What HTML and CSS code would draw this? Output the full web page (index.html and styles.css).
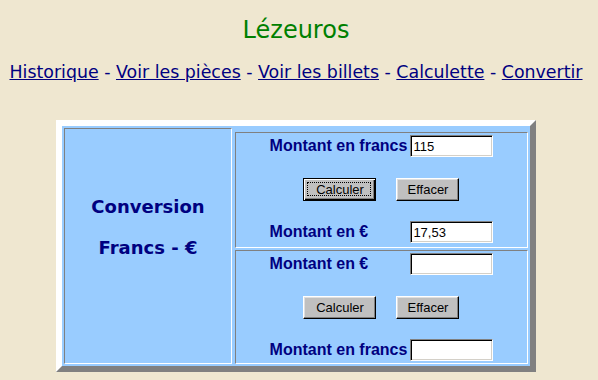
FILE: index.html
```html
<!DOCTYPE html>
<html lang="fr">
<head>
    <meta charset="UTF-8">
    <title>Lézeuros - Convertir</title>
    <link rel="stylesheet" href="styles.css">
</head>
<body>
    <div class="title">Lézeuros</div>

    <div class="nav">
        <a href="#">Historique</a> - <a href="#">Voir les pièces</a> - <a href="#">Voir les billets</a> - <a href="#">Calculette</a> - <a href="#">Convertir</a>
    </div>

    <div class="converter">
        <div class="side">
            <p>Conversion</p>
            <p>Francs - €</p>
        </div>

        <div class="forms">
            <form class="box box-top">
                <label for="francs1">Montant en francs</label>
                <input type="text" id="francs1" value="115">
                <div class="buttons">
                    <button type="button" class="btn btn-calc focused">Calculer</button>
                    <button type="reset" class="btn btn-clear">Effacer</button>
                </div>
                <label for="euros1">Montant en €</label>
                <input type="text" id="euros1" value="17,53">
            </form>

            <form class="box box-bottom">
                <label for="euros2">Montant en €</label>
                <input type="text" id="euros2">
                <div class="buttons">
                    <button type="button" class="btn btn-calc">Calculer</button>
                    <button type="reset" class="btn btn-clear">Effacer</button>
                </div>
                <label for="francs2">Montant en francs</label>
                <input type="text" id="francs2">
            </form>
        </div>
    </div>
</body>
</html>
```

FILE: styles.css
```css
body {
    margin: 0;
    padding: 0 14px 0 8px;
    background-color: #efe7d0; /* fond beige */
    color: #000080;
    font-family: "DejaVu Sans", Verdana, sans-serif;
}

.title {
    padding-top: 16px;
    font-size: 24px;
    line-height: 28px;
    color: #008000;
    text-align: center;
}

.nav {
    margin-top: 18px;
    font-size: 17.4px;
    line-height: 20px;
    text-align: center;
    white-space: nowrap;
}

.nav a {
    color: #000080;
}

/* tableau de conversion */
.converter {
    display: flex;
    gap: 2px;
    box-sizing: border-box;
    width: 480px;
    height: 252px;
    margin: 38px auto 0;
    padding: 2px;
    border: 6px solid;
    border-color: #ffffff #808080 #808080 #ffffff;
    background-color: #99ccff;
}

.side {
    display: flex;
    flex-direction: column;
    justify-content: center;
    align-items: center;
    box-sizing: border-box;
    width: 168px;
    padding-bottom: 39px;
    border: 1px solid;
    border-color: #808080 #ffffff #ffffff #808080;
    font-size: 18px;
    font-weight: bold;
    line-height: 41px;
}

.side p {
    margin: 0;
}

.forms {
    flex: 1;
    display: flex;
    flex-direction: column;
    gap: 2px;
    padding: 4px 0 0 1px;
}

.box {
    display: grid;
    grid-template-columns: auto auto;
    justify-content: center;
    align-content: space-between;
    align-items: center;
    column-gap: 3px;
    box-sizing: border-box;
    margin: 0;
    border: 1px solid;
    border-color: #808080 #ffffff #ffffff #808080;
}

.box-top {
    height: 116px;
    padding: 2px 0 4px;
}

.box-bottom {
    height: 114px;
    padding: 2px 0 2px;
}

.box label {
    font-family: "Liberation Sans", Arial, sans-serif;
    font-size: 16px;
    font-weight: bold;
    color: #000080;
}

.box input {
    box-sizing: border-box;
    width: 83px;
    height: 22px;
    margin: 0;
    padding: 0 2px;
    border: 1px solid;
    border-color: #808080 #ffffff #ffffff #808080;
    box-shadow: inset 1px 1px 0 #000000, inset -1px -1px 0 #d4d0c8;
    background: #ffffff;
    font-family: "Liberation Sans", Arial, sans-serif;
    font-size: 13px;
    color: #000000;
    outline: none;
}

.buttons {
    grid-column: 1 / -1;
    display: flex;
    justify-content: center;
    gap: 20px;
}

.btn {
    position: relative;
    box-sizing: border-box;
    height: 23px;
    margin: 0;
    padding: 0;
    border: 1px solid;
    border-color: #ffffff #000000 #000000 #ffffff;
    box-shadow: inset -1px -1px 0 #808080, inset 1px 1px 0 #dfdfdf;
    background-color: #c0c0c0;
    font-family: "Liberation Sans", Arial, sans-serif;
    font-size: 13px;
    color: #000000;
}

.btn-calc {
    width: 73px;
}

.btn-clear {
    width: 63px;
}

/* bouton actif (focus) */
.btn.focused {
    border-color: #000000;
    box-shadow: inset 1px 1px 0 #ffffff, inset -1px -1px 0 #000000, inset -2px -2px 0 #808080;
}

.btn.focused::after {
    content: "";
    position: absolute;
    top: 3px;
    left: 3px;
    right: 4px;
    bottom: 4px;
    border: 1px dotted #000000;
}
```
